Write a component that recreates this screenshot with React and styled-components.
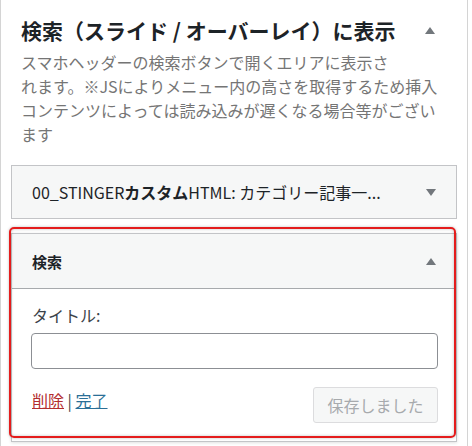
import React from 'react';
import styled, { createGlobalStyle } from 'styled-components';

const GlobalStyle = createGlobalStyle`
	body {
		margin: 0;
		background: #fff;
		font-family: "Noto Sans CJK JP", "Noto Sans", sans-serif;
		color: #3c434a;
	}
`;

const Panel = styled.div`
	width: 466px;
	height: 446px;
	border-left: 1px solid #d4d4d4;
	border-right: 1px solid #d4d4d4;
	background: #fff;
	overflow: hidden;
`;

const SectionHead = styled.div`
	display: flex;
	align-items: center;
	justify-content: space-between;
	padding: 14px 32px 0 20px;
	line-height: 32px;
`;

const SectionTitle = styled.h2`
	margin: 0;
	font-size: 21px;
	font-weight: 700;
	color: #1d2327;
	white-space: nowrap;
`;

const Description = styled.p`
	margin: 4px 0 0;
	padding: 0 20px;
	font-size: 16px;
	line-height: 24px;
	color: #757575;
	white-space: nowrap;
`;

const WidgetList = styled.div`
	display: flex;
	flex-direction: column;
	gap: 14px;
	padding: 19px 10px 0;
`;

const Widget = styled.div`
	position: relative;
	border: 1px solid #c3c4c7;
	background: #fff;
	box-shadow: ${p => (p.$open ? '0 1px 3px rgba(0, 0, 0, 0.12)' : 'none')};
`;

const WidgetTop = styled.div`
	display: flex;
	align-items: center;
	justify-content: space-between;
	height: ${p => (p.$open ? '54px' : '52px')};
	padding: 0 20px;
	background: #f6f7f7;
	border-bottom: ${p => (p.$open ? '1px solid #a7aaad' : 'none')};
`;

const WidgetTitle = styled.h3`
	margin: 0;
	font-size: ${p => (p.$bold ? '15px' : '16px')};
	font-weight: ${p => (p.$bold ? 700 : 400)};
	color: #1d2327;
	white-space: nowrap;

	b {
		font-weight: 700;
	}
`;

const WidgetBody = styled.div`
	padding: 15px 18px 18px 19px;
`;

const Label = styled.label`
	display: block;
	font-size: 16px;
	line-height: 22px;
	color: #3c434a;
	padding-left: 1px;
`;

const TextInput = styled.input`
	display: block;
	box-sizing: border-box;
	width: 100%;
	height: 36px;
	margin-top: 7px;
	border: 1px solid #8c8f94;
	border-radius: 4px;
	background: #fff;
`;

const Actions = styled.div`
	display: flex;
	align-items: flex-start;
	justify-content: space-between;
	margin-top: 18px;
`;

const Links = styled.div`
	font-size: 16px;
	line-height: 26px;
	padding-left: 1px;
	color: #3c434a;
`;

const ActionLink = styled.a`
	color: ${p => (p.$danger ? '#b32d2e' : '#2a6f97')};
	text-decoration: underline;
	cursor: pointer;
`;

const SaveButton = styled.button`
	width: 125px;
	height: 36px;
	border: 1px solid #dcdcde;
	border-radius: 3px;
	background: #f6f7f7;
	color: #a7aaad;
	font-family: inherit;
	font-size: 16px;
`;

const Highlight = styled.div`
	position: absolute;
	top: -7px;
	left: -3px;
	right: 0;
	bottom: 3px;
	border: 2px solid #e41c1c;
	border-radius: 5px;
	box-shadow: 0 0 3px rgba(0, 0, 0, 0.25), inset 0 0 3px rgba(0, 0, 0, 0.25);
	pointer-events: none;
`;

const Arrow = ({ up }) => (
	<svg width="10" height="7" viewBox="0 0 10 7" style={{ flexShrink: 0 }}>
		<path d={up ? 'M0 7 L5 0 L10 7 Z' : 'M0 0 L10 0 L5 7 Z'} fill="#72777c" />
	</svg>
);

export default function App() {
	return (
		<>
			<GlobalStyle />
			<Panel>
				<SectionHead>
					<SectionTitle>検索（スライド / オーバーレイ）に表示</SectionTitle>
					<Arrow up />
				</SectionHead>
				<Description>
					スマホヘッダーの検索ボタンで開くエリアに表示さ<br />
					れます。※JSによりメニュー内の高さを取得するため挿入<br />
					コンテンツによっては読み込みが遅くなる場合等がござい<br />
					ます
				</Description>
				<WidgetList>
					<Widget>
						<WidgetTop>
							<WidgetTitle>
								00_STINGER<b>カスタム</b>HTML: カテゴリー記事一...
							</WidgetTitle>
							<Arrow />
						</WidgetTop>
					</Widget>
					<Widget $open>
						<WidgetTop $open>
							<WidgetTitle $bold>検索</WidgetTitle>
							<Arrow up />
						</WidgetTop>
						<WidgetBody>
							<Label>タイトル:</Label>
							<TextInput type="text" />
							<Actions>
								<Links>
									<ActionLink $danger>削除</ActionLink> | <ActionLink>完了</ActionLink>
								</Links>
								<SaveButton disabled>保存しました</SaveButton>
							</Actions>
						</WidgetBody>
						<Highlight />
					</Widget>
				</WidgetList>
			</Panel>
		</>
	);
}
